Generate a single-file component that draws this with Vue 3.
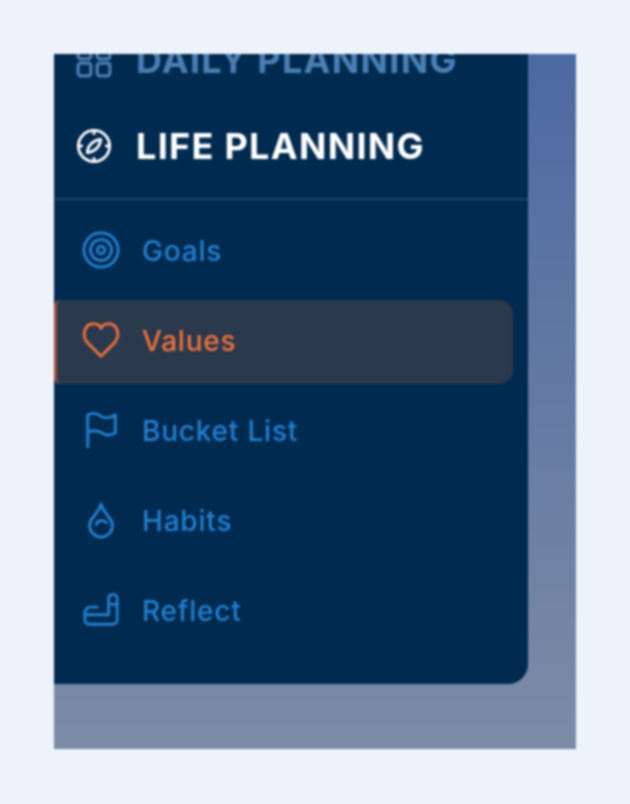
<template>
  <div class="page">
    <div class="frame">
      <aside class="panel">
        <div class="section dim">
          <svg class="head-icon" viewBox="0 0 34 34" fill="none" stroke="currentColor" stroke-width="3">
            <rect x="2" y="4" width="12" height="12" rx="2.5" />
            <rect x="20" y="4" width="12" height="12" rx="2.5" />
            <rect x="2" y="20" width="12" height="12" rx="2.5" />
            <rect x="20" y="20" width="12" height="12" rx="2.5" />
          </svg>
          <span>DAILY PLANNING</span>
        </div>
        <div class="section current">
          <svg class="head-icon" viewBox="0 0 38 38" fill="none" stroke="currentColor" stroke-width="3" stroke-linecap="round">
            <circle cx="19" cy="19" r="16.5" />
            <path d="M26 12 C26 19 20 25 12 26 C12 19 18 13 26 12 Z" stroke-linejoin="round" />
            <path d="M19 4 V6 M19 32 V34 M4 19 H6 M32 19 H34" />
          </svg>
          <span>LIFE PLANNING</span>
        </div>
        <div class="divider"></div>
        <nav class="list">
          <a v-for="item in items" :key="item.label" class="item" :class="{ active: item.active }">
            <svg class="icon" viewBox="0 0 40 40" fill="none" stroke="currentColor" stroke-width="3" stroke-linecap="round" stroke-linejoin="round">
              <path v-for="d in item.paths" :key="d" :d="d" />
            </svg>
            <span>{{ item.label }}</span>
          </a>
        </nav>
      </aside>
    </div>
  </div>
</template>

<script setup>
const circle = (r) => `M20 ${20 - r}a${r} ${r} 0 1 0 0.01 0Z`

const items = [
  { label: 'Goals', paths: [circle(18), circle(11), circle(4)] },
  { label: 'Values', active: true, paths: ['M20 37 L5 22 C-1 13 4 2 13 3 C16 3 19 5 20 8 C21 5 24 3 27 3 C36 2 41 13 35 22 Z'] },
  { label: 'Bucket List', paths: ['M6 38 V4 C12 1 17 3 21 6 C25 8 29 8 35 4 V23 C30 26 25 26 21 23 C17 21 11 20 6 22'] },
  { label: 'Habits', paths: ['M20 3 C19 9 15 12 12 17 A12 12 0 1 0 28 17 C25 12 21 9 20 3 Z', 'M15 25 C16 20 22 19 26 23'] },
  { label: 'Reflect', paths: ['M16 17 H9 C5 17 3 20 3 25 H28 V8 C28 2 37 2 37 8 V30 C37 33 35 35 33 35 H7 C5 35 3 33 3 30 V25', 'M28 14 H37'] }
]
</script>

<style>
body {
  background: #edf2fb;
}
</style>

<style scoped>
.page {
  width: 630px;
  height: 804px;
  padding: 54px;
  box-sizing: border-box;
  font-family: Inter, "Noto Sans", sans-serif;
  filter: blur(0.9px);
}

.frame {
  width: 522px;
  height: 695px;
  overflow: hidden;
  background: linear-gradient(180deg, #4c6aa2 0%, #7d8ba6 100%);
}

.panel {
  width: 474px;
  height: 630px;
  box-sizing: border-box;
  overflow: hidden;
  background: #012a50;
  border-bottom-right-radius: 20px;
}

.section {
  display: flex;
  align-items: center;
  gap: 24px;
  height: 86px;
  padding-left: 22px;
  font-size: 36px;
  font-weight: 700;
  letter-spacing: 1.3px;
  box-sizing: border-box;
}

.section span {
  white-space: nowrap;
}

.dim {
  margin-top: -37px;
  color: #4a7fb2;
}

.current {
  color: #ffffff;
}

.head-icon {
  width: 36px;
  height: 36px;
  flex: none;
}

.divider {
  height: 2px;
  margin-top: 9px;
  background: #1b4469;
}

.list {
  display: flex;
  flex-direction: column;
  gap: 6px;
  padding-top: 10px;
}

.item {
  display: flex;
  align-items: center;
  gap: 22px;
  width: 459px;
  height: 84px;
  padding: 0 0 2px 28px;
  box-sizing: border-box;
  color: #2280d0;
  font-size: 28px;
  font-weight: 500;
  letter-spacing: 0.8px;
}

.item.active {
  padding-left: 25px;
  color: #ee7240;
  background: #2b394c;
  border-left: 3px solid #9c5238;
  border-radius: 6px 14px 14px 6px;
}

.icon {
  width: 38px;
  height: 38px;
  margin-bottom: 2px;
  flex: none;
}
</style>
